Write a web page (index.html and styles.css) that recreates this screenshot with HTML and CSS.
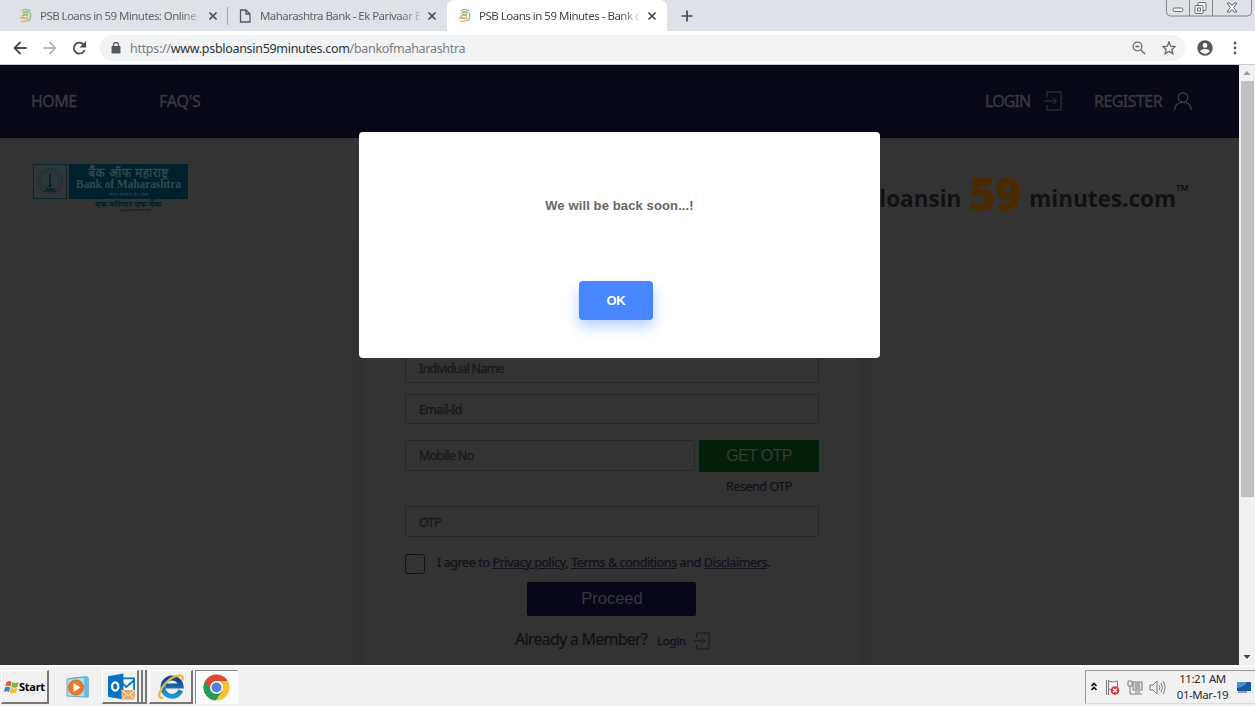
FILE: index.html
```html
<!DOCTYPE html>
<html lang="en">
<head>
<meta charset="utf-8">
<title>PSB Loans in 59 Minutes - Bank of Maharashtra</title>
<link rel="stylesheet" href="styles.css">
</head>
<body>
<svg width="0" height="0" class="defs">
  <symbol id="psb" viewBox="0 0 16 16"><path d="M4 3q4-3 9 0M5 5q4-2 7 0" stroke="#86b98c" stroke-width="1.4" fill="none"/><path d="M5 6.500h6M4 9q4-3 7 0M4 11h7" stroke="#b7b45f" stroke-width="1.500" fill="none"/><path d="M2 11q4-2 7 1M3 14q4 1 8-1" stroke="#e9ae74" stroke-width="1.600" fill="none"/><path d="M13 5q2 5-2 9" stroke="#82bd98" stroke-width="1.400" fill="none"/></symbol>
  <symbol id="close" viewBox="0 0 10 10"><path d="M1.500 1.500l7 7M8.500 1.500l-7 7" stroke="#45484c" stroke-width="1.700"/></symbol>
  <symbol id="enter" viewBox="0 0 18 20"><path d="M3 6V1h14v18H3v-5M0 10h12M9 6.500l3.500 3.500L9 13.500" fill="none" stroke="currentColor"/></symbol>
</svg>
<div class="screen">
  <div class="tabs">
    <div class="tab first"><svg class="fav"><use href="#psb"/></svg><span class="title t1">PSB Loans in 59 Minutes: Online</span><svg class="x"><use href="#close"/></svg></div>
    <div class="tab second"><svg class="doc" viewBox="0 0 12 14"><path d="M1.500 1h5.500l4 4v8h-9.500zM7 1v4h4" fill="none" stroke="#55585d" stroke-width="1.300"/></svg><span class="title t2">Maharashtra Bank - Ek Parivaar E</span><svg class="x"><use href="#close"/></svg></div>
    <div class="tab active"><svg class="fav"><use href="#psb"/></svg><span class="title t3">PSB Loans in 59 Minutes - Bank o</span><svg class="x"><use href="#close"/></svg></div>
    <svg class="plus" viewBox="0 0 12 12"><path d="M6 .5v11M.5 6h11" stroke="#45484c" stroke-width="1.700"/></svg>
    <svg class="winctl" viewBox="0 0 86 17"><path d="M.5 0v12q0 4 4 4h77q4 0 4-4V0M23.500 0v16M46.500 0v16" fill="none" stroke="#84878c"/><g fill="#f4f5f7" stroke="#696d73"><rect x="7" y="8" width="10" height="3.500" rx="1.500"/><rect x="32" y="2.500" width="8" height="8" rx="1"/><rect x="29" y="5.500" width="8" height="8" rx="1"/><rect x="31.500" y="8" width="3" height="3"/><path d="M61 3h3l2 2.500L68 3h3l-3.300 4.500L71 12h-3l-2-2.500-2 2.500h-3l3.300-4.500z"/></g></svg>
  </div>
  <div class="toolbar">
    <svg class="navs" viewBox="0 0 80 16"><g fill="none" stroke-width="1.800"><path d="M14.500 8H2.500M8.500 2l-6 6 6 6" stroke="#484b4f"/><path d="M31.500 8h12M37.500 2l6 6-6 6" stroke="#b5b8bb"/><path d="M71.500 4.500A5.500 5.500 0 1 0 72.500 10" stroke="#484b4f"/></g><path d="M74 1v6.500h-6.500z" fill="#484b4f"/></svg>
    <div class="omnibox">
      <svg class="lock" viewBox="0 0 10 12"><path d="M1 4.500h8V11H1z" fill="#55585d" stroke="#55585d"/><path d="M2.500 5V3a2.500 2.500 0 0 1 5 0v2" fill="none" stroke="#55585d" stroke-width="1.300"/></svg>
      <span class="url">https://<b>www.psbloansin59minutes.com</b>/bankofmaharashtra</span>
      <svg class="mag" viewBox="0 0 14 14"><circle cx="5.500" cy="5.500" r="4.400"/><path d="M9 9l4 4M3.500 5.500h4"/></svg>
      <svg class="star" viewBox="0 0 14 14"><path d="M7 1l1.700 4.100 4.400.4-3.300 2.900 1 4.300L7 10.400l-3.800 2.300 1-4.300L.9 5.500l4.400-.4z"/></svg>
    </div>
    <svg class="user" viewBox="0 0 16 16"><circle cx="8" cy="8" r="7.700" fill="#54575c"/><circle cx="8" cy="5.400" r="2.400" fill="#fff"/><path d="M3.200 11.300Q4.200 8.900 8 8.900t4.800 2.400Q11 14 8 14t-4.800-2.700z" fill="#fff"/></svg>
    <svg class="dots" viewBox="0 0 4 14"><g fill="#54575c"><circle cx="2" cy="2" r="1.400"/><circle cx="2" cy="7" r="1.400"/><circle cx="2" cy="12" r="1.400"/></g></svg>
  </div>
  <div class="viewport">
    <div class="page">
      <nav class="nav">
        <a class="home">HOME</a><a class="faq">FAQ'S</a>
        <a class="login">LOGIN</a><svg class="enter"><use href="#enter"/></svg>
        <a class="register">REGISTER</a><svg class="person" viewBox="0 0 18 18"><circle cx="9" cy="5.500" r="4.700"/><path d="M.7 18Q1 10.500 9 10.500T17.300 18"/></svg>
      </nav>
      <div class="brands">
        <div class="bom">
          <div class="bomtop">
            <svg class="seal" viewBox="0 0 34 35"><rect x=".5" y=".5" width="33" height="34" fill="#303536" stroke="#052733"/><circle cx="17" cy="17" r="12" fill="none" stroke="#18303a" stroke-width="2" stroke-dasharray="1 1"/><circle cx="17" cy="17" r="9" fill="none" stroke="#203139"/><path d="M17 10v13M13 25h8M11 27h12M15.500 22h3" stroke="#04222d" stroke-width="1.600"/></svg>
            <div class="plate"><span class="hi">बैंक ऑफ महाराष्ट्र</span><span class="en">Bank of Maharashtra</span><span class="small">भारत सरकार का उद्यम</span></div>
          </div>
          <span class="tag">एक परिवार एक बैंक</span>
          <svg class="swash" viewBox="0 0 32 3"><path d="M0 2Q14 0 32 1" fill="none" stroke="#0b2129"/></svg>
        </div>
        <div class="psb"><span class="loans">loansin</span><span class="n59">59</span><span class="mins">minutes.com</span><span class="tm">™</span></div>
      </div>
      <form class="panel">
        <div class="field name"><span>Individual Name</span></div>
        <div class="field email"><span>Email-Id</span></div>
        <div class="mobile"><div class="field"><span>Mobile No</span></div><div class="getotp">GET OTP</div></div>
        <div class="resend"><span>Resend OTP</span></div>
        <div class="field otp"><span>OTP</span></div>
        <div class="agree"><i class="check"></i><span class="terms">I agree to <u>Privacy policy</u>, <u>Terms &amp; conditions</u> and <u>Disclaimers</u>.</span></div>
        <div class="proceed">Proceed</div>
        <div class="member"><span class="already">Already a Member?</span><span class="log">Login</span><svg class="enter2" viewBox="0 0 18 20"><use href="#enter"/></svg></div>
      </form>
      <div class="modal"><p>We will be back soon...!</p><div class="ok">OK</div></div>
    </div>
    <div class="scroll">
      <svg viewBox="0 0 16 16"><path d="M4.500 10L8 6l3.500 4z" fill="#969696"/></svg>
      <div class="thumb"></div>
      <svg viewBox="0 0 16 16"><path d="M4.500 6L8 10l3.500-4z" fill="#444"/></svg>
    </div>
  </div>
  <div class="taskbar">
    <div class="task start"><svg viewBox="0 0 15 14"><path d="M2.500 2q3-2 5 0L6.500 6.500Q4 5 1.300 6.500z" fill="#e2602c"/><path d="M8.300 2.200q3 1.500 6.500 0L13.500 7q-3 1.500-6.300 0z" fill="#82b43b"/><path d="M1 7.500q2.700-1.500 5.200 0L5 12Q2.500 10.500 0 12z" fill="#3c82c8"/><path d="M7 8q3 1.500 6.300 0L12 12.500q-3 1.500-6.300 0z" fill="#f1bd30"/></svg><span>Start</span></div>
    <svg class="media" viewBox="0 0 24 24"><path d="M3 3L21 1l2 2v19l-3 1z" fill="#74bbd9"/><path d="M1 4l18-2v20L1 21z" fill="#a9dbec" stroke="#5eacce"/><circle cx="10" cy="12.500" r="7.500" fill="#ee7825" stroke="#d66c23"/><path d="M7.500 8v9l7-4.500z" fill="#fff"/></svg>
    <div class="task outlook"><svg viewBox="0 0 30 28"><path d="M14 5h14v15H14z" fill="#fff" stroke="#0873bd" stroke-width="1.800"/><path d="M15 9l5 5 8-7" fill="none" stroke="#0873bd" stroke-width="1.800"/><path d="M1 3l16-3v27L1 24z" fill="#0873c4"/><ellipse cx="8.500" cy="13.500" rx="3.300" ry="4.200" fill="none" stroke="#fff" stroke-width="2.300"/><path d="M15 17h14v10H15z" fill="#eaae6b"/><path d="M15 17l7 6 7-6M15 27l5-5M29 27l-5-5" fill="none" stroke="#fff3e5"/></svg></div>
    <i class="stack"></i><i class="stack"></i>
    <div class="task ie"><svg viewBox="0 0 28 28"><defs><linearGradient id="ieg" x1="0" y1="0" x2="0" y2="1"><stop stop-color="#0c3f88"/><stop offset="1" stop-color="#2498d4"/></linearGradient></defs><path d="M23.500 18A9.500 9.500 0 1 1 24 13.500H8" fill="none" stroke="url(#ieg)" stroke-width="5"/><path d="M5 26Q-2 26 4 16 11 4 22 2.500q5 0 3 5" fill="none" stroke="#e9b63a" stroke-width="2.300"/></svg></div>
    <div class="task chrome"><svg viewBox="0 0 28 28"><circle cx="14" cy="14" r="13.500" fill="#f5c531"/><path d="M14 14L2.300 7.200A13.500 13.500 0 0 0 13 27.500l7-10z" fill="#259b57"/><path d="M2.300 7.200A13.500 13.500 0 0 1 25.700 7.200H14L8.500 17z" fill="#dc4938"/><circle cx="14" cy="14" r="6.700" fill="#fff"/><circle cx="14" cy="14" r="5.200" fill="#4b83df"/></svg></div>
    <div class="tray">
      <svg class="icons" viewBox="0 0 78 18"><path d="M1.500 8L4 5.500 6.500 8M1.500 12L4 9.500 6.500 12" fill="none" stroke="#111" stroke-width="1.700"/><g fill="none" stroke="#7b7b7b"><path d="M16.500 2v15M18.500 2v15M18.500 3q4 2 9 0v8q-5 2-9 0"/><rect x="43" y="4" width="9" height="8" fill="#ddd"/><path d="M38 3h4v5h-4zM40 8v8h3M45 14h5M43 16h9M45 6h5M45 8h5M45 10h5"/><path d="M60 7h3l4-4v13l-4-4h-3zM69 7q2 2.500 0 5M71 5q3 4.500 0 9M73 3q4 6.500 0 13"/></g><circle cx="25" cy="12.500" r="4.300" fill="#d83b35"/><path d="M23.200 10.700l3.600 3.600M26.800 10.700l-3.600 3.600" stroke="#fff" stroke-width="1.300"/></svg>
      <div class="clock"><span class="time">11:21 AM</span><span class="date">01-Mar-19</span></div>
      <svg class="desk" viewBox="0 0 14 12"><path d="M0 1h14v9H0z" fill="#1559a4"/><path d="M0 1h10Q8 6 0 7z" fill="#4990cf"/><path d="M1 11h9" stroke="#26466b"/></svg>
    </div>
  </div>
</div>
</body>
</html>
```
FILE: styles.css
```css
* { box-sizing: border-box; }
body { margin: 0; font-family: "Noto Sans", "Open Sans", sans-serif; overflow: hidden; }
svg { display: block; flex: none; }
.defs { position: absolute; }
.screen { width: 1255px; height: 706px; display: flex; flex-direction: column; }
span, a { white-space: nowrap; }

.tabs { height: 31px; background: #dee1e6; display: flex; }
.tab { height: 31px; display: flex; align-items: center; font-size: 11.5px; color: #606367; flex: none; }
.first { width: 228px; padding-left: 18px; background: linear-gradient(#a5a8ac, #a5a8ac) 227px 7px / 1px 18px no-repeat; }
.second { width: 219px; padding-left: 11px; }
.active { width: 220px; padding-left: 10px; background: #fff; border-radius: 7px 7px 0 0; color: #414448; }
.fav { width: 15px; height: 15px; margin-right: 7px; }
.doc { width: 12px; height: 14px; margin-right: 9px; }
.title { flex: none; width: 160px; letter-spacing: -.56px; -webkit-mask-image: linear-gradient(90deg, #000 88%, rgba(0,0,0,.2)); mask-image: linear-gradient(90deg, #000 88%, rgba(0,0,0,.2)); }
.t2 { letter-spacing: -.56px; }
.t3 { letter-spacing: -.5px; width: 160px; }
.x { width: 10px; height: 10px; margin-left: 8px; }
.t2 + .x { margin-left: 7px; }
.plus { width: 12px; height: 12px; margin: 10px 0 0 14px; }
.winctl { width: 86px; height: 17px; margin-left: auto; margin-right: 3px; }

.toolbar { height: 34px; background: #fff; display: flex; align-items: center; border-bottom: 1px solid #c9cacc; }
.navs { width: 80px; height: 16px; margin-left: 12px; }
.omnibox { width: 1085px; height: 26px; margin-left: 8px; border-radius: 13px; background: #f1f3f4; display: flex; align-items: center; padding-left: 11px; }
.lock { width: 10px; height: 12px; margin-right: 9px; }
.url { font-size: 12.5px; color: #7a7d81; width: 1002px; letter-spacing: -.3px; padding-top: 1px; }
.url b { color: #303337; font-weight: 400; }
.mag, .star { width: 14px; height: 14px; fill: none; stroke: #63666a; stroke-width: 1.3; }
.star { margin-left: 16px; }
.user { width: 16px; height: 16px; margin-left: 12px; }
.dots { width: 4px; height: 14px; margin-left: 20px; }

.viewport { height: 600px; display: flex; }
.page { width: 1239px; height: 600px; background: #333; position: relative; overflow: hidden; }
.nav { height: 73px; background: #080817; display: flex; align-items: center; color: #38383f; font-size: 16px; letter-spacing: -.4px; -webkit-text-stroke: .4px #38383f; padding-bottom: 1px; }
.home { width: 128px; margin-left: 31px; padding-bottom: 1px; letter-spacing: -.5px; }
.faq { width: 826px; padding-bottom: 1px; letter-spacing: -.25px; }
.login { width: 59px; letter-spacing: -.9px; }
.enter { width: 18px; height: 20px; }
.register { width: 80px; margin-left: 32px; letter-spacing: -.55px; }
.person { width: 18px; height: 18px; fill: none; stroke: #43434b; stroke-width: 1.2; }

.brands { height: 112px; display: flex; justify-content: space-between; }
.bom { width: 155px; margin: 26px 0 0 33px; display: flex; flex-direction: column; }
.bomtop { display: flex; gap: 2px; height: 35px; }
.seal { width: 34px; height: 35px; }
.plate { width: 119px; height: 35px; background: #00202d; color: #334852; display: flex; flex-direction: column; align-items: center; overflow: hidden; }
.hi { font-size: 12px; line-height: 17px; height: 14px; letter-spacing: .5px; -webkit-text-stroke: .4px #334852; }
.en { font: 700 11.5px/13px "Liberation Serif", serif; letter-spacing: -.1px; }
.small { font-size: 5px; line-height: 7px; }
.tag { font-size: 8.5px; line-height: 10px; margin-left: 62px; font-weight: 700; font-style: italic; color: #071f29; }
.swash { width: 32px; height: 3px; margin-left: 86px; }
.psb { display: flex; align-items: baseline; height: 70px; margin: 19px 50px 0 0; font-family: "Open Sans", sans-serif; font-weight: 700; color: #111; }
.loans, .mins { font-size: 22.5px; }
.n59 { font-size: 46px; line-height: 64px; font-weight: 800; color: #4a2b00; margin: 0 8px; letter-spacing: -1px; position: relative; top: 4px; }
.tm { font-size: 17px; font-weight: 400; align-self: flex-start; line-height: 67px; }

.panel { width: 497px; height: 450px; margin-left: 363px; padding: 103px 41px 0 42px; box-shadow: 0 0 12px rgba(0,0,0,.12); color: #11111a; }
.field { height: 30px; border: 1px solid #272727; border-radius: 3px; padding-left: 13px; font-size: 12.5px; line-height: 30px; letter-spacing: -.65px; color: #191919; -webkit-text-stroke: .3px #191919; }
.name { letter-spacing: -.8px; }
.email { margin-top: 11px; }
.mobile { margin-top: 16px; display: flex; gap: 4px; }
.mobile .field { width: 290px; height: 31px; }
.getotp { width: 120px; height: 32px; border-radius: 2px; background: #031f0a; color: #333d34; font: 16px/32px "Liberation Sans", sans-serif; letter-spacing: -.6px; text-align: center; }
.resend { font-size: 12.5px; line-height: 18px; letter-spacing: -.45px; height: 34px; padding: 6px 0 0 321px; -webkit-text-stroke: .2px #11111a; }
.otp { height: 31px; line-height: 31px; }
.agree { display: flex; margin-top: 17px; height: 28px; }
.check { width: 20px; height: 20px; border: 1px solid #111; border-radius: 3px; margin-right: 12px; }
.terms { font-size: 12.5px; line-height: 17px; letter-spacing: -.4px; -webkit-text-stroke: .2px #11111a; }
.proceed { width: 169px; height: 34px; margin-left: 122px; padding-left: 1px; background: #070717; border-radius: 2px; color: #38383c; font: 16.5px/33px "Liberation Sans", sans-serif; text-align: center; }
.member { display: flex; align-items: center; height: 46px; padding-left: 110px; }
.already { width: 142px; font-size: 16px; letter-spacing: -.75px; -webkit-text-stroke: .2px #11111a; }
.log { width: 37px; font-size: 11.5px; letter-spacing: -.3px; -webkit-text-stroke: .3px #11111a; margin-top: 2px; }
.enter2 { width: 16px; height: 18px; margin-top: 4px; color: #151515; }

.modal { position: absolute; left: 359px; top: 67px; width: 521px; height: 226px; border-radius: 4px; background: #fff; font-family: "Liberation Sans", Arial, sans-serif; }
.modal p { margin: 64px 0 0; text-align: center; color: #666; font-size: 13px; line-height: 19px; font-weight: 700; letter-spacing: .12px; }
.ok { width: 74px; height: 39px; margin: 66px 0 0 220px; border-radius: 4px; background: #4886ff; box-shadow: 0 7px 13px rgba(72,134,255,.38); color: #fff; font-size: 13px; font-weight: 700; line-height: 39px; letter-spacing: -.3px; text-align: center; }

.scroll { width: 16px; height: 600px; background: #f1f1f1; display: flex; flex-direction: column; }
.scroll svg { width: 16px; height: 16px; }
.thumb { width: 13px; height: 416px; margin: 0 0 152px 2px; background: #c1c1c1; }

.taskbar { height: 41px; border-top: 2px solid #f9f9f9; background: #f1f1f1; display: flex; padding-top: 3px; align-items: flex-start; }
.task { height: 34px; display: flex; align-items: center; border: 1px solid #fff; border-right: 2px solid #777; border-bottom: 2px solid #777; }
.start { width: 48px; margin-left: 1px; padding-left: 2px; gap: 0; font-size: 11px; font-weight: 700; letter-spacing: -.25px; }
.start svg { width: 15px; height: 14px; }
.media { width: 24px; height: 24px; margin: 5px 0 0 17px; }
.outlook { width: 37px; margin-left: 12px; padding-left: 4px; }
.outlook svg { width: 29px; height: 28px; }
.stack { width: 4px; height: 34px; border-right: 2px solid #777; border-bottom: 2px solid #777; }
.ie { width: 44px; margin-left: 2px; padding-left: 8px; }
.ie svg, .chrome svg { width: 27px; height: 27px; }
.chrome { width: 43px; margin-left: 2px; padding-left: 7px; border-color: #888 #fff #fff #888; border-width: 1px; background: #fbfbfb; }
.tray { width: 170px; height: 34px; margin-left: auto; border: 1px solid #999; border-right: 0; border-bottom-color: #ddd; display: flex; align-items: center; }
.icons { width: 78px; height: 18px; margin-left: 4px; }
.clock { width: 57px; margin-left: 6px; font-size: 11.5px; line-height: 16px; text-align: center; letter-spacing: -.45px; color: #302734; display: flex; flex-direction: column; }
.desk { width: 14px; height: 12px; margin-left: 6px; }
```
